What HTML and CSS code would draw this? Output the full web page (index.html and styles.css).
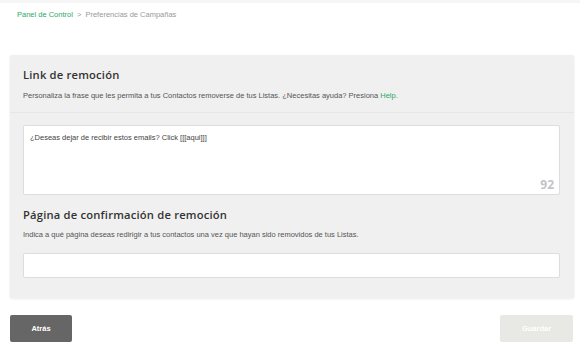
FILE: index.html
```html
<!DOCTYPE html>
<html lang="es">
<head>
    <meta charset="UTF-8">
    <meta name="viewport" content="width=device-width, initial-scale=1.0">
    <title>Preferencias de Campañas</title>
    <link rel="stylesheet" href="styles.css">
</head>
<body>
    <div class="topbar"></div>
    <div class="breadcrumb">
        <a href="#" class="crumb-link">Panel de Control</a>
        <span class="crumb-sep">&gt;</span>
        <span class="crumb-current">Preferencias de Campañas</span>
    </div>

    <div class="panel">
        <div class="panel-head">
            <h2 class="section-title">Link de remoción</h2>
            <p class="section-desc">Personaliza la frase que les permita a tus Contactos removerse de tus Listas. ¿Necesitas ayuda? Presiona <a href="#" class="help">Help.</a></p>
        </div>
        <div class="panel-body">
            <div class="textarea">
                <div class="textarea-text">¿Deseas dejar de recibir estos emails? Click [[[aqui]]]</div>
                <div class="counter">92</div>
            </div>
            <h2 class="section-title second">Página de confirmación de remoción</h2>
            <p class="section-desc">Indica a qué página deseas redirigir a tus contactos una vez que hayan sido removidos de tus Listas.</p>
            <div class="input"></div>
        </div>
    </div>

    <div class="actions">
        <button class="btn btn-back">Atrás</button>
        <button class="btn btn-save">Guardar</button>
    </div>
</body>
</html>
```

FILE: styles.css
```css
body {
    margin: 0;
    background: #fff;
    font-family: "Liberation Sans", Arial, sans-serif;
    color: #555;
}
.topbar {
    height: 3px;
    background: #f6f6f6;
}
.breadcrumb {
    padding: 7px 0 0 17px;
    font-size: 7.5px;
    line-height: 10px;
    color: #999;
}
.crumb-link {
    color: #2aa96b;
    text-decoration: none;
}
.crumb-sep {
    margin: 0 2px;
}
.panel {
    margin: 35px 6px 0 10px;
    background: #f0f0f0;
    border-radius: 2px;
    box-shadow: 0 1px 3px rgba(0, 0, 0, 0.08);
}
.panel-head {
    padding: 12px 14px 0 13px;
    height: 45px;
    border-bottom: 1px solid #e6e6e6;
}
.section-title {
    margin: 0;
    font-family: "Open Sans", sans-serif;
    font-weight: 600;
    font-size: 11.2px;
    line-height: 15px;
    color: #333;
    letter-spacing: 0.2px;
}
.section-desc {
    margin: 9px 0 0;
    font-size: 7.5px;
    line-height: 10px;
    color: #555;
}
.help {
    color: #2aa96b;
    text-decoration: none;
}
.panel-body {
    padding: 12px 14px 20px 13px;
}
.textarea {
    height: 70px;
    box-sizing: border-box;
    background: #fff;
    border: 1px solid #ddd;
    border-radius: 2px;
    padding: 7px 5px 3px 6px;
    display: flex;
    flex-direction: column;
    justify-content: space-between;
}
.textarea-text {
    font-size: 7.5px;
    line-height: 10px;
    color: #444;
}
.counter {
    align-self: flex-end;
    font-family: "Open Sans", sans-serif;
    font-weight: 700;
    font-size: 12px;
    line-height: 13px;
    color: #c4c4c4;
}
.second {
    margin-top: 12px;
}
.panel-body .section-desc {
    margin-top: 8px;
}
.input {
    margin-top: 13px;
    height: 25px;
    box-sizing: border-box;
    background: #fff;
    border: 1px solid #ddd;
    border-radius: 2px;
}
.actions {
    display: flex;
    justify-content: space-between;
    margin: 17px 7px 0 10px;
}
.btn {
    height: 27px;
    border: none;
    border-radius: 2px;
    font-family: "Liberation Sans", Arial, sans-serif;
    font-size: 7.5px;
    font-weight: 700;
    color: #fff;
    cursor: pointer;
}
.btn-back {
    width: 62px;
    background: #666;
}
.btn-save {
    width: 73px;
    background: #e8e8e4;
}
```
